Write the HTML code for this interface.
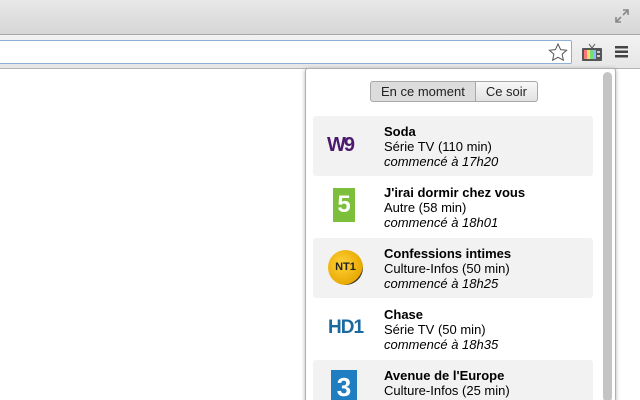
<!DOCTYPE html><html><head><style>
html,body{margin:0;width:640px;height:400px;overflow:hidden}
body{background:#fff;font-family:"Liberation Sans",Arial,sans-serif;position:relative}
.top{position:absolute;left:0;top:0;width:640px;height:34px;background:linear-gradient(#e8e8e8,#d6d6d6);border-bottom:1px solid #a8a8a8}
.tb{position:absolute;left:0;top:35px;width:640px;height:33px;background:linear-gradient(#f2f2f2,#e6e6e6);border-bottom:1px solid #b5b5b5}
.omni{position:absolute;left:-2px;top:40px;width:572px;height:22px;background:#fff;border:1px solid #8cb0d8;border-radius:2px}
.pop{position:absolute;left:305px;top:68px;width:309px;height:340px;background:#fff;border:1px solid #b0b0b0;box-shadow:0 1px 4px rgba(0,0,0,.3);border-radius:3px}
.btns{position:absolute;left:370px;top:81px;height:21px;display:flex;font-size:13px;color:#222}
.btns div{border:1px solid #a8a8a8;padding:0 10px;line-height:20px;background:linear-gradient(#f8f8f8,#e2e2e2)}
.btns .a{background:#dcdcdc;border-radius:3px 0 0 3px}
.btns .b{border-left:none;border-radius:0 3px 3px 0}
.row{position:absolute;left:313px;width:280px;height:60px;border-radius:3px}
.g{background:#f2f2f2}
.t{position:absolute;left:71px;top:8px;font-size:13px;line-height:15px;color:#000}
.t b{display:block}.t i{display:block}
.lg{position:absolute;left:14px;top:14px;width:36px;height:32px}
.sb{position:absolute;left:603px;top:72px;width:9px;height:330px;background:#c4c4c4;border-radius:5px}
</style></head><body>
<div class="top"></div>
<svg style="position:absolute;left:614px;top:8px" width="16" height="16"><path d="M9 2h5v5M14 2l-5 5M2 9v5h5M2 14l5-5" stroke="#888" stroke-width="1.6" fill="none"/></svg>
<div class="tb"></div>
<div class="omni"></div>
<svg style="position:absolute;left:548px;top:43px" width="20" height="18"><path d="M10 1l2.6 5.6 6 .6-4.5 4 1.3 6L10 14.3 4.6 17.2l1.3-6-4.5-4 6-.6z" fill="#fff" stroke="#555" stroke-width="1"/></svg>
<svg style="position:absolute;left:581px;top:43px" width="22" height="20"><path d="M8 1l3 4 3-4" stroke="#555" fill="none"/><rect x="1" y="5" width="20" height="13" rx="1" fill="#555"/><rect x="3" y="7" width="3" height="9" fill="#f77"/><rect x="6" y="7" width="3" height="9" fill="#fd6"/><rect x="9" y="7" width="3" height="9" fill="#7d7"/><rect x="12" y="7" width="3" height="9" fill="#8bf"/><rect x="16" y="8" width="3" height="2" fill="#ccc"/><rect x="16" y="12" width="3" height="2" fill="#ccc"/></svg>
<svg style="position:absolute;left:615px;top:45px" width="14" height="14"><rect y="1" width="13" height="2.5" fill="#444"/><rect y="5.5" width="13" height="2.5" fill="#444"/><rect y="10" width="13" height="2.5" fill="#444"/></svg>
<div class="pop"></div>
<div class="sb"></div>
<div class="btns"><div class="a">En ce moment</div><div class="b">Ce soir</div></div>
<div class="row g" style="top:116px"><div class="lg" style="font:bold 20px 'Liberation Sans';color:#4b1a6e;top:18px;left:14px;letter-spacing:-2px">W9</div><div class="t"><b>Soda</b>Série TV (110 min)<i>commencé à 17h20</i></div></div>
<div class="row" style="top:177px"><div class="lg" style="left:20px;top:11px;width:22px;height:34px;background:#7cbf3a;color:#fff;font:bold 24px 'Liberation Sans';text-align:center;line-height:34px">5</div><div class="t"><b>J'irai dormir chez vous</b>Autre (58 min)<i>commencé à 18h01</i></div></div>
<div class="row g" style="top:238px"><div class="lg" style="left:15px;top:12px;width:35px;height:35px;border-radius:50%;background:radial-gradient(circle at 40% 40%,#ffd23a,#e8a800 70%,#333 72%);font:bold 11px 'Liberation Sans';text-align:center;line-height:35px;color:#222">NT1</div><div class="t"><b>Confessions intimes</b>Culture-Infos (50 min)<i>commencé à 18h25</i></div></div>
<div class="row" style="top:299px"><div class="lg" style="font:bold 19px 'Liberation Sans';color:#1a6aa0;top:18px;left:15px;letter-spacing:-1px">HD1</div><div class="t"><b>Chase</b>Série TV (50 min)<i>commencé à 18h35</i></div></div>
<div class="row g" style="top:360px"><div class="lg" style="left:18px;top:10px;width:26px;height:34px;background:#1f7ec2;color:#fff;font:bold 26px 'Liberation Sans';text-align:center;line-height:34px">3</div><div class="t"><b>Avenue de l'Europe</b>Culture-Infos (25 min)<i>commencé à 18h45</i></div></div>
</body></html>
